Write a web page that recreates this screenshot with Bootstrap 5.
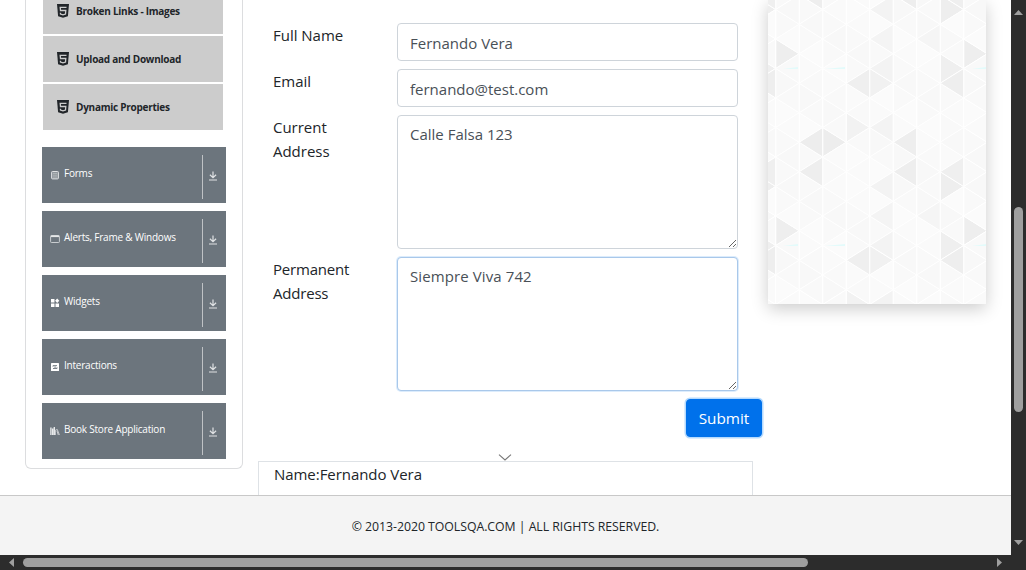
<!DOCTYPE html>
<html lang="en">
<head>
<meta charset="utf-8">
<title>Text Box</title>
<link href="https://cdn.jsdelivr.net/npm/bootstrap@5.3.0/dist/css/bootstrap.min.css" rel="stylesheet">
<style>
  html, body { height: 100%; overflow: hidden; }
  body { font-family: "Open Sans", "Noto Sans", sans-serif; font-size: 15px; line-height: 24px; color: #212529; background: #fff; }
  .shell { width: 1026px; height: 570px; display: grid; grid-template: 555px 15px / 1011px 15px; }
  .page-body { height: 495px; padding-left: 25px; }
  .side { width: 218px; height: 469px; border: 1px solid #dcdddf; border-top: 0; border-radius: 0 0 6px 6px; padding: 0 16px; }
  .sub-list { margin: -12px 0 17px; padding: 0 3px 0 1px; gap: 2px; }
  .sub-item { height: 46px; background: #ccc; padding: 0 0 1px 14px; font-size: 10px; font-weight: 700; letter-spacing: -.26px; line-height: 14px; color: #212529; }
  .sub-item svg { width: 12px; height: 14px; margin: 1px 7px 0 0; }
  .group-list { gap: 8px; }
  .group-head { height: 56px; background: #6c757d; color: #fff; padding: 0 0 0 8px; font-size: 10px; line-height: 14px; letter-spacing: -.22px; width: 184px; }
  .group-head .lead-icon { width: 10px; height: 10px; margin: -1px 4px 0 0; flex: none; }
  .group-head .caption { margin-top: -4px; }
  .group-toggle { width: 24px; height: 44px; border-left: 1px solid #bfc2c5; margin: 3px 0 0; padding: 0 3px 2px 0; }
  .center { width: 495px; margin-left: 15px; }
  .fields { padding: 23px 15px 0; gap: 8px; }
  .field-label { width: 124px; padding-right: 30px; flex: none; letter-spacing: -.02px; }
  .label-tight { letter-spacing: -.2px; }
  .field-box.form-control { width: 341px; height: 38px; flex: none; font-size: 15px; line-height: 24px; padding: 7px 12px 5px; border: 1px solid #ced4da; border-radius: 4px; color: #495057; }
  textarea.field-box.form-control { height: 134px; padding-top: 6px; resize: vertical; }
  .field-box.glow { border-color: #a9c8ea; box-shadow: 0 0 0 1px #dcecfc; letter-spacing: .1px; }
  .btn-send { width: 76px; height: 38px; font-size: 15.3px; line-height: 24px; border-radius: 4px; padding: 6px 0; background: #0071eb; color: #fff; border: 1px solid #0071eb; box-shadow: 0 0 0 1.5px #b5dafe; margin-right: -24px; }
  .result { border: 1px solid #dee2e6; height: 120px; padding: 0 15px; letter-spacing: -.05px; }
  .chevron { height: 24px; padding-top: 17px; margin-left: -2px; }
  .chevron svg { display: block; }
  .ad { width: 218px; height: 304px; margin-left: 15px; box-shadow: 0 5px 16px rgba(0,0,0,.2); }
  .ad svg { display: block; }
  .foot { height: 60px; background: #f4f4f4; border-top: 1px solid #c8c8c8; font-size: 12.3px; letter-spacing: -.04px; padding-top: 2px; }
  .bar { background: #2c2c2c; }
  .thumb { background: #9f9f9f; border-radius: 5px; }
</style>
</head>
<body>
<svg class="d-none">
  <symbol id="html5" viewBox="0 0 12 14"><path fill="#212529" d="M0 0h12l-1.1 12.2L6 13.7l-4.9-1.5z"/><path fill="none" stroke="#ccc" stroke-width="1.3" d="M9.5 3.3H3.2l.3 3.2h5.3l-.3 3.6-2.5.8-2.5-.8-.1-1.4"/></symbol>
  <symbol id="down" viewBox="0 0 10 10"><path fill="none" stroke="#e0e2e4" stroke-width="1.2" d="M5 .5v6M1.9 3.7 5 6.7l3.1-3M1 9h8"/></symbol>
</svg>
<div class="shell">
  <div class="overflow-hidden">
    <main class="page-body d-flex align-items-start overflow-hidden">
      <aside class="side">
        <div class="sub-list d-flex flex-column">
          <div class="sub-item d-flex align-items-center"><svg><use href="#html5"/></svg>Broken Links - Images</div>
          <div class="sub-item d-flex align-items-center"><svg><use href="#html5"/></svg>Upload and Download</div>
          <div class="sub-item d-flex align-items-center"><svg><use href="#html5"/></svg>Dynamic Properties</div>
        </div>
        <div class="group-list d-flex flex-column">
          <div class="group-head d-flex align-items-center">
            <svg class="lead-icon" viewBox="0 0 10 10"><rect x="1.6" y="1.5" width="6.8" height="7.4" rx=".8" fill="#8f969c" stroke="#dfe1e3"/><path d="M3 3.5h4M3 5.2h4M3 7h4" stroke="#b5babd" stroke-width=".8"/></svg>
            <span class="caption">Forms</span><span class="group-toggle ms-auto d-flex align-items-center justify-content-center"><svg width="10" height="10"><use href="#down"/></svg></span>
          </div>
          <div class="group-head d-flex align-items-center">
            <svg class="lead-icon" viewBox="0 0 10 10"><rect x=".6" y="1.5" width="8.8" height="7" rx=".7" fill="none" stroke="#c9cdd0"/><path d="M1 2.3h8" stroke="#e5e7e8" stroke-width="1.6"/></svg>
            <span class="caption">Alerts, Frame &amp; Windows</span><span class="group-toggle ms-auto d-flex align-items-center justify-content-center"><svg width="10" height="10"><use href="#down"/></svg></span>
          </div>
          <div class="group-head d-flex align-items-center">
            <svg class="lead-icon" viewBox="0 0 10 10"><path fill="#fff" d="M1 1h3.5v3.5H1zM1 5.5h3.5V9H1zM5.5 5.5H9V9H5.5zM7.2.6 9.3 2.8 7.2 4.9 5.1 2.8z"/></svg>
            <span class="caption">Widgets</span><span class="group-toggle ms-auto d-flex align-items-center justify-content-center"><svg width="10" height="10"><use href="#down"/></svg></span>
          </div>
          <div class="group-head d-flex align-items-center">
            <svg class="lead-icon" viewBox="0 0 10 10"><rect x="1" y="1" width="8" height="8" rx=".6" fill="#fff"/><path fill="none" stroke="#6c757d" stroke-width=".9" d="M3 4.7V3.6h4M7 5.3v1.2H3M4.2 5.1h1.8"/></svg>
            <span class="caption">Interactions</span><span class="group-toggle ms-auto d-flex align-items-center justify-content-center"><svg width="10" height="10"><use href="#down"/></svg></span>
          </div>
          <div class="group-head d-flex align-items-center">
            <svg class="lead-icon" viewBox="0 0 10 10"><path fill="none" stroke="#e8eaeb" stroke-width="1.4" d="M.9 1.5V9M2.7 2.5V9M4.3 1V9"/><path fill="none" stroke="#d2d5d8" stroke-width=".9" d="m5.4 4.2 1.9-.7L9.4 9M5.4 4.2V9M7 5l1.3 4"/></svg>
            <span class="caption">Book Store Application</span><span class="group-toggle ms-auto d-flex align-items-center justify-content-center"><svg width="10" height="10"><use href="#down"/></svg></span>
          </div>
        </div>
      </aside>
      <section class="center">
        <form class="fields d-flex flex-column">
          <div class="d-flex"><label class="field-label" for="n">Full Name</label><input id="n" class="form-control field-box" value="Fernando Vera"></div>
          <div class="d-flex"><label class="field-label" for="e">Email</label><input id="e" class="form-control field-box" value="fernando@test.com"></div>
          <div class="d-flex"><label class="field-label" for="c">Current Address</label><textarea id="c" class="form-control field-box">Calle Falsa 123</textarea></div>
          <div class="d-flex"><label class="field-label label-tight" for="p">Permanent Address</label><textarea id="p" class="form-control field-box glow">Siempre Viva 742</textarea></div>
          <div class="d-flex justify-content-end"><button type="button" class="btn btn-primary btn-send">Submit</button></div>
        </form>
        <div class="chevron d-flex justify-content-center"><svg width="14" height="7" viewBox="0 0 14 7"><path d="m1 .7 6 5.3 6-5.3" fill="none" stroke="#777" stroke-width="1.1"/></svg></div>
        <div class="result">Name:Fernando Vera</div>
      </section>
      <div class="ad"><svg id="mosaic" width="218" height="304"></svg></div>
    </main>
    <footer class="foot d-flex align-items-center justify-content-center"><span>© 2013-2020 TOOLSQA.COM | ALL RIGHTS RESERVED.</span></footer>
  </div>
  <div class="bar d-flex flex-column align-items-center">
    <svg width="9" height="5" style="margin-top:10px"><path fill="#9f9f9f" d="M0 5 4.5 0 9 5z"/></svg>
    <div class="thumb" style="width:9px;height:205px;margin-top:192px"></div>
    <svg class="mt-auto" width="9" height="5" style="margin-bottom:10px"><path fill="#9f9f9f" d="M0 0h9L4.5 5z"/></svg>
  </div>
  <div class="bar d-flex align-items-center">
    <svg width="5" height="9" style="margin-left:9px"><path fill="#9f9f9f" d="M5 0v9L0 4.5z"/></svg>
    <div class="thumb" style="width:785px;height:9px;margin-left:9px"></div>
    <svg class="ms-auto" width="5" height="9" style="margin-right:9px"><path fill="#9f9f9f" d="M0 0v9l5-4.5z"/></svg>
  </div>
  <div class="bar"></div>
</div>
<script src="https://cdn.jsdelivr.net/npm/bootstrap@5.3.0/dist/js/bootstrap.bundle.min.js"></script>
<script>
  // Triangle mosaic: 8 columns by 12 half-rows, repeated.
  const W = 23.5, H = 14.75, X0 = 7.7, Y0 = 9.5;
  const shades = { R0_3:'#eeeeee', L5_0:'#f3f3f3', R7_0:'#eeeeee', L5_2:'#f4f4f4', L7_2:'#f5f5f5', L5_4:'#f3f3f3', R7_4:'#efefef',
    L0_5:'#eeeeee', L4_5:'#efefef', R4_5:'#f1f1f1', R3_8:'#f2f2f2', L5_8:'#f3f3f3', L2_9:'#ededed', R2_9:'#ededed', L6_9:'#eeeeee',
    L2_11:'#eeeeee', L6_11:'#eeeeee', L0_11:'#efefef' };
  const base = ['#f9f9f9', '#fafafa', '#f8f8f8', '#fbfbfb', '#f9f9f9'];
  const mod = (a, n) => ((a % n) + n) % n;
  let out = '';
  for (let c = -1; c <= 10; c++) for (let k = -3; k <= 23; k++) {
    if (mod(c + k, 2) === 0) continue;
    const x = X0 + c * W, y = Y0 + k * H, cc = mod(c, 8), kk = mod(k, 12);
    for (const s of ['R', 'L']) {
      const fill = shades[s + cc + '_' + kk] || base[(cc * 7 + kk * 3 + (s === 'R' ? 2 : 0)) % 5];
      out += `<path d="M${x} ${y - H}v${2 * H}L${x + (s === 'R' ? W : -W)} ${y}z" fill="${fill}" stroke="#fff" stroke-width="1"/>`;
    }
  }
  for (const y of [68, 245]) for (const [x, w] of [[15, 15], [57, 20], [204, 14]])
    out += `<path d="M${x} ${y + 1}l${w} -2v2z" fill="#e3fbfb"/>`;
  document.getElementById('mosaic').innerHTML = out;
</script>
</body>
</html>
